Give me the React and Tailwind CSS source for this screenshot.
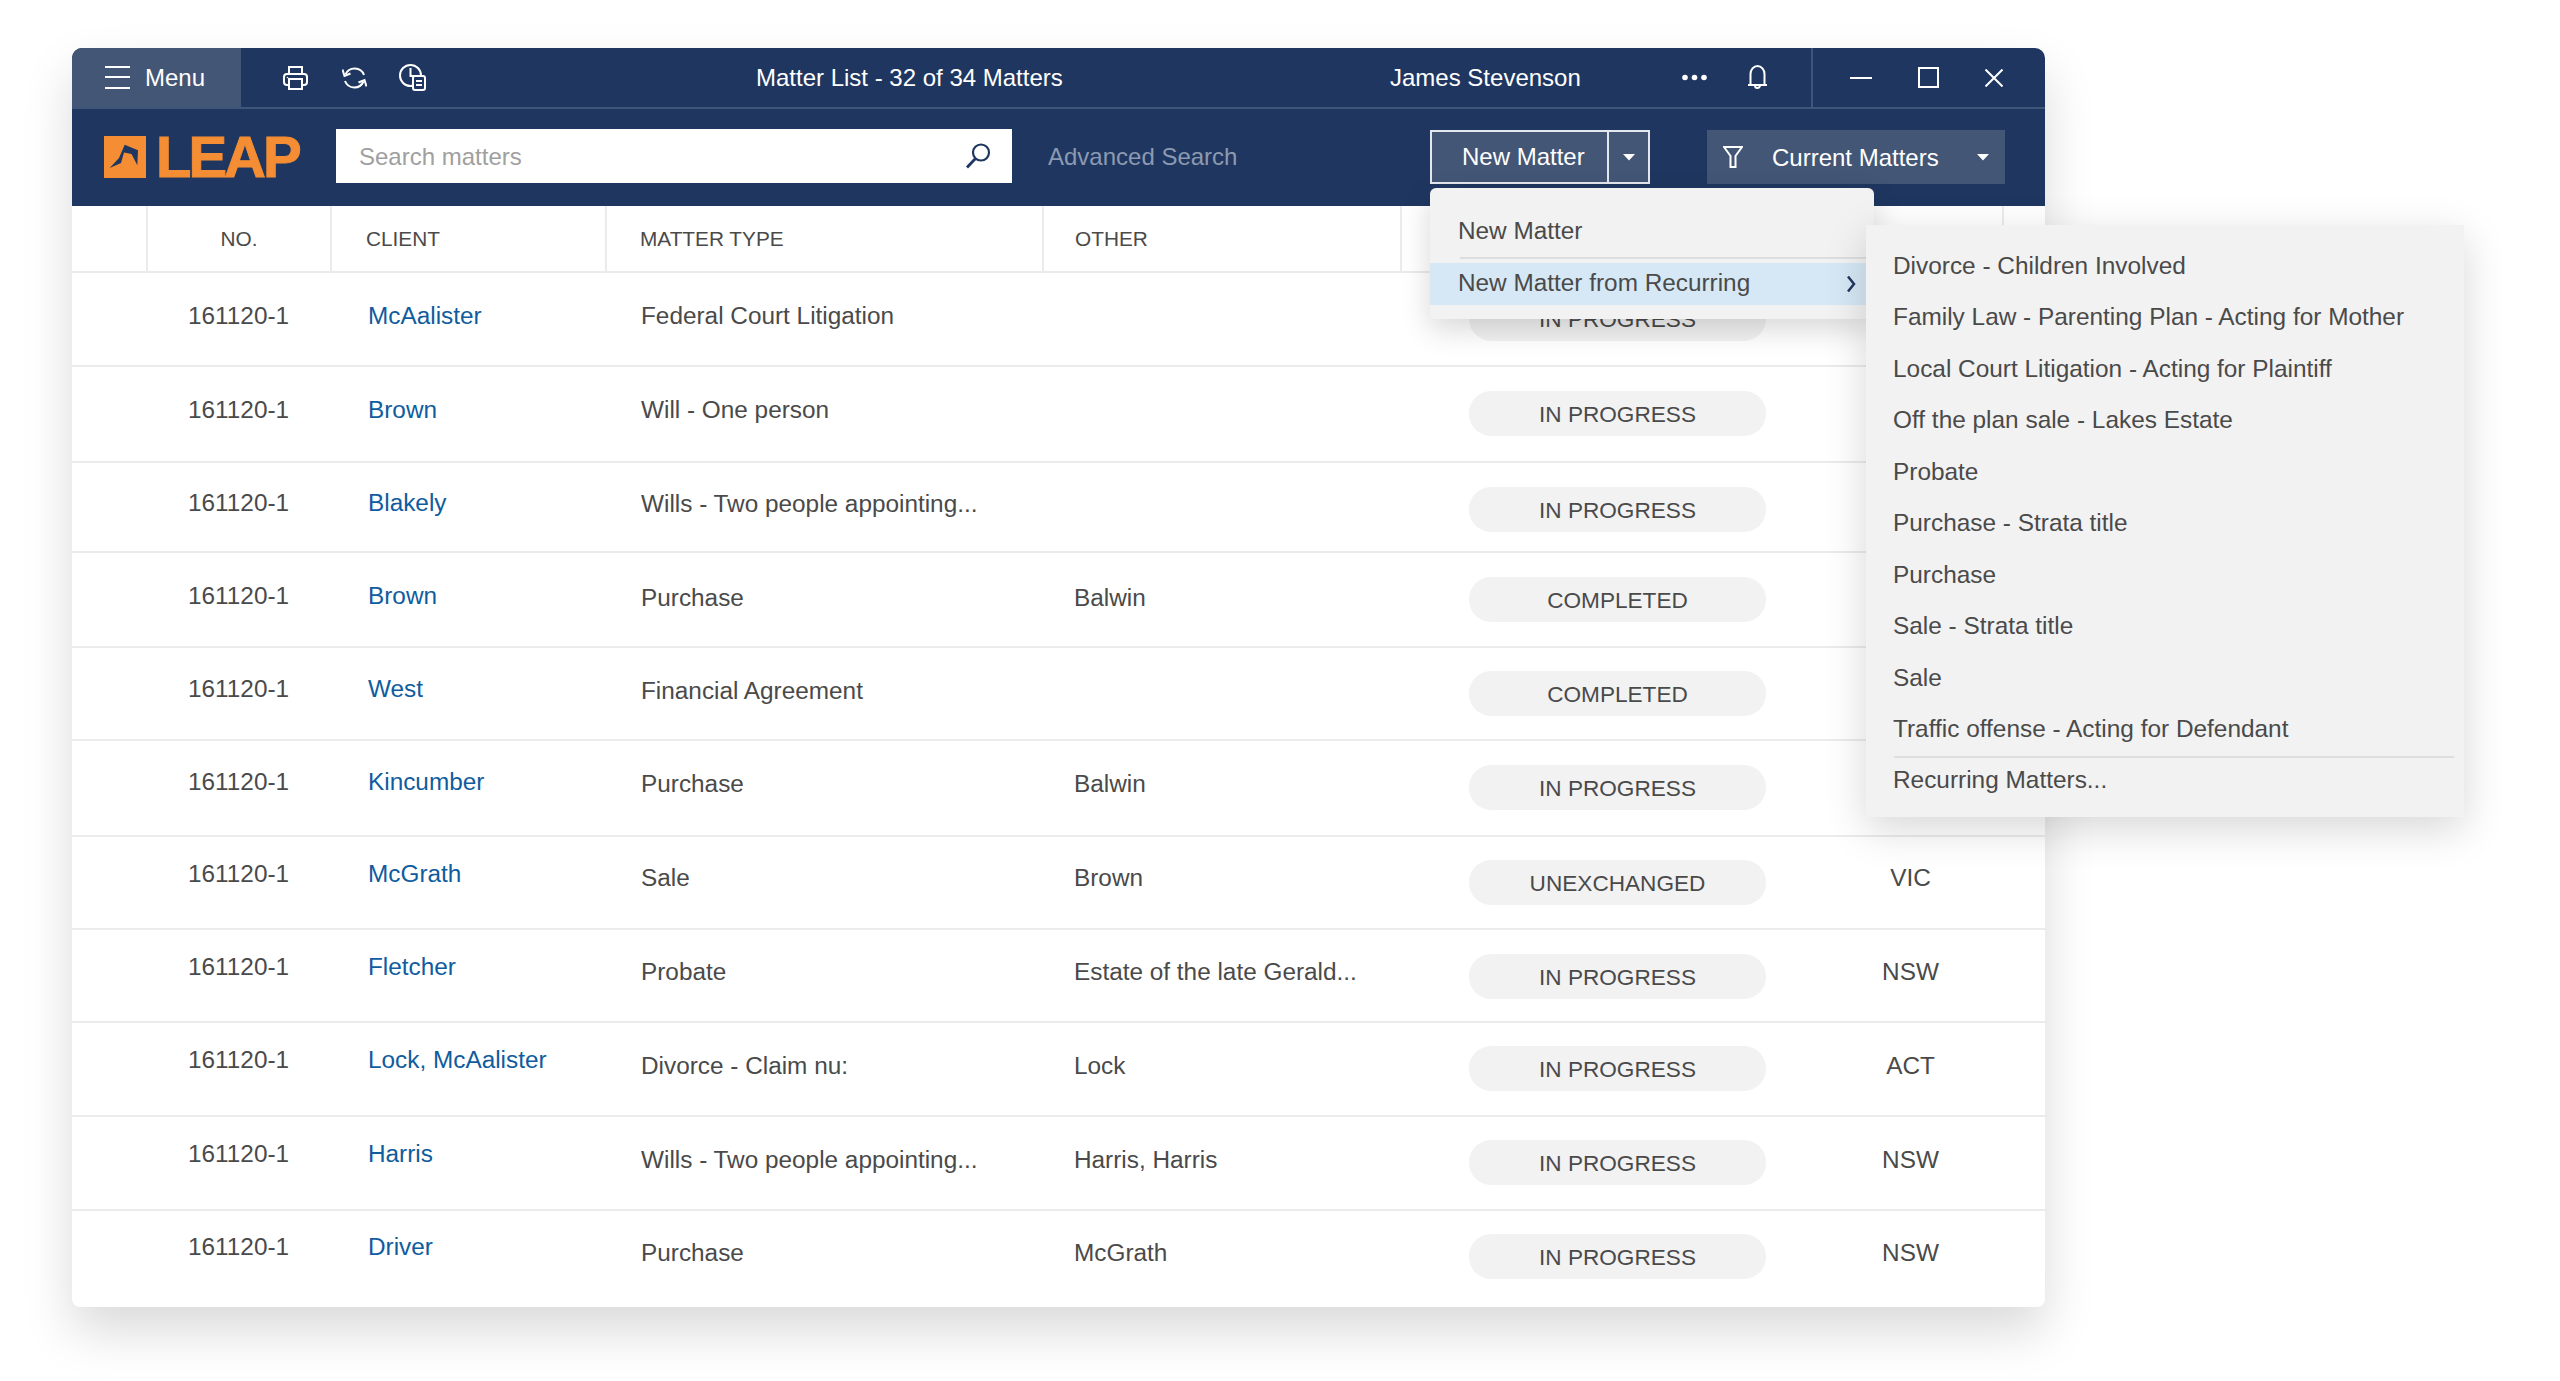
import React from "react";

const rows = [
  { h: "h-[94px]", a: "pt-[29px]", b: "pt-[29px]", p: "pt-[23px]", no: "161120-1", client: "McAalister", type: "Federal Court Litigation", other: "", status: "IN PROGRESS", state: "" },
  { h: "h-[96px]", a: "pt-[29px]", b: "pt-[29px]", p: "pt-[24px]", no: "161120-1", client: "Brown", type: "Will - One person", other: "", status: "IN PROGRESS", state: "" },
  { h: "h-[90px]", a: "pt-[26px]", b: "pt-[27px]", p: "pt-[24px]", no: "161120-1", client: "Blakely", type: "Wills - Two people appointing...", other: "", status: "IN PROGRESS", state: "" },
  { h: "h-[95px]", a: "pt-[29px]", b: "pt-[31px]", p: "pt-[24px]", no: "161120-1", client: "Brown", type: "Purchase", other: "Balwin", status: "COMPLETED", state: "" },
  { h: "h-[93px]", a: "pt-[27px]", b: "pt-[29px]", p: "pt-[23px]", no: "161120-1", client: "West", type: "Financial Agreement", other: "", status: "COMPLETED", state: "" },
  { h: "h-[96px]", a: "pt-[27px]", b: "pt-[29px]", p: "pt-[24px]", no: "161120-1", client: "Kincumber", type: "Purchase", other: "Balwin", status: "IN PROGRESS", state: "" },
  { h: "h-[93px]", a: "pt-[23px]", b: "pt-[27px]", p: "pt-[23px]", no: "161120-1", client: "McGrath", type: "Sale", other: "Brown", status: "UNEXCHANGED", state: "VIC" },
  { h: "h-[93px]", a: "pt-[23px]", b: "pt-[28px]", p: "pt-[24px]", no: "161120-1", client: "Fletcher", type: "Probate", other: "Estate of the late Gerald...", status: "IN PROGRESS", state: "NSW" },
  { h: "h-[94px]", a: "pt-[23px]", b: "pt-[29px]", p: "pt-[23px]", no: "161120-1", client: "Lock, McAalister", type: "Divorce - Claim nu:", other: "Lock", status: "IN PROGRESS", state: "ACT" },
  { h: "h-[94px]", a: "pt-[23px]", b: "pt-[29px]", p: "pt-[23px]", no: "161120-1", client: "Harris", type: "Wills - Two people appointing...", other: "Harris, Harris", status: "IN PROGRESS", state: "NSW" },
  { h: "h-[96px]", a: "pt-[22px]", b: "pt-[28px]", p: "pt-[23px]", no: "161120-1", client: "Driver", type: "Purchase", other: "McGrath", status: "IN PROGRESS", state: "NSW" }
];

const recurring = [
  "Divorce - Children Involved",
  "Family Law - Parenting Plan - Acting for Mother",
  "Local Court Litigation - Acting for Plaintiff",
  "Off the plan sale - Lakes Estate",
  "Probate",
  "Purchase - Strata title",
  "Purchase",
  "Sale - Strata title",
  "Sale",
  "Traffic offense - Acting for Defendant"
];

// small white triangle used on both split buttons
const Caret = () => (
  <svg width="14" height="8" viewBox="0 0 14 8">
    <path d="M1 1h12L7 7.5z" fill="#fff" />
  </svg>
);

const TitleBar = () => (
  <div className="flex h-[61px] items-center rounded-t-[10px] border-b-2 border-[#3e5678] bg-[#1f3760] text-white">
    <div className="flex h-[59px] w-[169px] shrink-0 items-center self-start rounded-tl-[10px] bg-[#435676] pl-[33px]">
      <svg width="25" height="23" viewBox="0 0 25 23" stroke="#fff" strokeWidth="2">
        <path d="M0 1h25M0 11h25M0 22h25" />
      </svg>
      <span className="ml-[15px]">Menu</span>
    </div>
    <svg className="ml-[42px] shrink-0" width="25" height="24" viewBox="0 0 25 24" fill="none" stroke="#fff" strokeWidth="2">
      <path d="M6 8V1h13v7" />
      <rect x="1" y="8" width="23" height="11" rx="3" />
      <rect x="6" y="13" width="13" height="10" fill="#1f3760" />
      <circle cx="4.5" cy="11.5" r="0.8" fill="#fff" stroke="none" />
    </svg>
    <svg className="ml-[34px] shrink-0" width="25" height="24" viewBox="0 0 25 24" fill="none" stroke="#fff" strokeWidth="2">
      <path d="M3.5 8.5A10 10 0 0 1 22 9" />
      <path d="M21.5 15.5A10 10 0 0 1 3 15" />
      <path d="M0.5 3.5L2.5 10l6-2.5" />
      <path d="M24.5 20.5l-2-6.5-6 2.5" />
    </svg>
    <svg className="ml-[32px] shrink-0" width="27" height="27" viewBox="0 0 27 27" fill="none" stroke="#fff" strokeWidth="2">
      <circle cx="11.5" cy="11.5" r="10.5" />
      <path d="M11.5 4v8h5" />
      <rect x="14" y="12" width="12" height="14" rx="2" fill="#1f3760" />
      <path d="M17 17h6M17 21h6" />
    </svg>
    <span className="ml-[330px] w-[634px] shrink-0">Matter List - 32 of 34 Matters</span>
    <span className="w-[292px] shrink-0">James Stevenson</span>
    <svg className="shrink-0" width="25" height="7" viewBox="0 0 25 7" fill="#fff">
      <circle cx="3" cy="3.5" r="2.8" />
      <circle cx="12.5" cy="3.5" r="2.8" />
      <circle cx="22" cy="3.5" r="2.8" />
    </svg>
    <svg className="ml-[40px] shrink-0" width="21" height="25" viewBox="0 0 21 25" fill="none" stroke="#fff" strokeWidth="2">
      <path d="M1 20h19M3.5 20V9a7 8 0 0 1 14 0v11" />
      <path d="M8 20.5a2.5 2.5 0 0 0 5 0" />
    </svg>
    <div className="ml-[43px] h-[59px] w-[2px] shrink-0 self-start bg-[#3e5678]" />
    <div className="ml-[37px] h-[2px] w-[22px] shrink-0 bg-white" />
    <div className="ml-[46px] h-[21px] w-[21px] shrink-0 border-2 border-white" />
    <svg className="ml-[46px] shrink-0" width="18" height="18" viewBox="0 0 18 18" stroke="#fff" strokeWidth="2">
      <path d="M0.5 0.5l17 17M17.5 0.5l-17 17" />
    </svg>
  </div>
);

const NavBar = () => (
  <div className="flex h-[97px] items-start bg-[#1f3760] pl-[32px] pt-[20px]">
    <div className="flex h-[54px] w-[232px] shrink-0 items-start pt-[7px]">
      <svg width="42" height="42" viewBox="0 0 42 42">
        <rect width="42" height="42" fill="#f48d33" />
        <path d="M5.7 32 15 22 20.7 8.7 34 14.3 33.3 29.3 27.5 18 20 16.5 17 27z" fill="#1f3760" />
      </svg>
      <span className="ml-[10px] text-[58px] leading-[42px] font-bold tracking-[-3px] text-[#f48d33] [-webkit-text-stroke:1px_#f48d33]">LEAP</span>
    </div>
    <div className="flex h-[54px] w-[676px] shrink-0 items-center justify-between bg-white pl-[23px] pr-[20px] text-[#a0a0a0]">
      <span className="pt-[2px]">Search matters</span>
      <svg width="28" height="26" viewBox="0 0 28 26" fill="none" stroke="#1f3760" strokeWidth="2.2">
        <circle cx="17" cy="9.5" r="8" />
        <path d="M11.5 15.5 3 24.5" strokeWidth="2.8" />
      </svg>
    </div>
    <span className="ml-[36px] mt-[14px] w-[382px] shrink-0 text-[#8c9ab1]">Advanced Search</span>
    <div className="mt-[1px] flex h-[54px] w-[220px] shrink-0 border-2 border-[#e4e8ee] bg-[#435676] text-white">
      <span className="w-[177px] shrink-0 border-r-2 border-[#e4e8ee] pl-[30px] leading-[50px]">New Matter</span>
      <span className="flex flex-1 items-center justify-center"><Caret /></span>
    </div>
    <div className="ml-[57px] mt-[1px] flex h-[54px] w-[298px] shrink-0 items-center bg-[#435676] pl-[16px] text-white">
      <svg width="20" height="22" viewBox="0 0 20 22" fill="none" stroke="#fff" strokeWidth="2">
        <path d="M1 1h18l-6.5 9v11h-5V10z" />
      </svg>
      <span className="ml-[29px] pt-[1px]">Current Matters</span>
      <span className="ml-[37px]"><Caret /></span>
    </div>
  </div>
);

const TableHead = () => (
  <div className="grid h-[67px] grid-cols-[76px_184px_275px_437px_358px_602px_1fr] border-b-2 border-[#ebebeb] text-[20.8px] leading-[66px]">
    <div className="border-r-2 border-[#ebebeb]" />
    <div className="border-r-2 border-[#ebebeb] text-center">NO.</div>
    <div className="border-r-2 border-[#ebebeb] pl-[34px]">CLIENT</div>
    <div className="border-r-2 border-[#ebebeb] pl-[33px]">MATTER TYPE</div>
    <div className="border-r-2 border-[#ebebeb] pl-[31px]">OTHER</div>
    <div className="border-r-2 border-[#ebebeb]" />
    <div />
  </div>
);

const Row = ({ row, last }) => (
  <div className={`grid grid-cols-[296px_273px_433px_395px_297px_1fr] text-[24.35px] ${row.h} ${last ? "" : "border-b-2 border-[#ebebeb]"}`}>
    <div className={`${row.a} pl-[116px]`}>{row.no}</div>
    <div className={`${row.a} text-[#0f5c9e]`}>{row.client}</div>
    <div className={row.b}>{row.type}</div>
    <div className={row.b}>{row.other}</div>
    <div className={row.p}>
      <div className="h-[45px] rounded-[22px] bg-[#f2f2f2] pt-[3px] text-center text-[22.6px] leading-[42px]">{row.status}</div>
    </div>
    <div className={`${row.b} pl-[10px] text-center`}>{row.state}</div>
  </div>
);

const NewMenu = () => (
  <div className="absolute left-[1358px] top-[140px] h-[131px] w-[444px] rounded-t-[6px] bg-[#f2f2f2] text-[24.35px] shadow-[0_10px_30px_rgba(0,0,0,0.16)]">
    <div className="flex h-[69px] items-end pb-[12px] pl-[28px]">New Matter</div>
    <div className="ml-[30px] h-[2px] bg-[#dedede]" />
    <div className="mt-[4px] flex h-[42px] items-center justify-between bg-[#d6e8f5] pl-[28px] pr-[18px]">
      <span className="pb-[2px]">New Matter from Recurring</span>
      <svg width="10" height="18" viewBox="0 0 10 18" fill="none" stroke="#1f3760" strokeWidth="2.5">
        <path d="M2 1.5 8 9l-6 7.5" />
      </svg>
    </div>
  </div>
);

const RecurringMenu = () => (
  <div className="absolute left-[1794px] top-[177px] h-[592px] w-[598px] bg-[#f2f2f2] pt-[15px] text-[24.4px] shadow-[0_12px_40px_rgba(0,0,0,0.16)]">
    {recurring.map((name, key) => (
      <div key={key} className="flex h-[51.5px] items-center pl-[27px]">{name}</div>
    ))}
    <div className="ml-[28px] mr-[10px] mt-[1px] h-[2px] bg-[#dedede]" />
    <div className="flex h-[44px] items-center pl-[27px]">Recurring Matters...</div>
  </div>
);

export default function App() {
  return (
    <div className="min-h-[1381px] bg-white pl-[72px] pt-[48px] font-['Liberation_Sans',Arial,sans-serif] text-[24px] leading-[28px] text-[#4a4a4a]">
      <div className="relative w-[1973px] rounded-t-[10px] rounded-b-[8px] bg-white shadow-[0_24px_50px_rgba(0,0,0,0.15)]">
        <TitleBar />
        <NavBar />
        <TableHead />
        {rows.map((row, key) => (
          <Row key={key} row={row} last={key === rows.length - 1} />
        ))}
        <NewMenu />
        <RecurringMenu />
      </div>
    </div>
  );
}
